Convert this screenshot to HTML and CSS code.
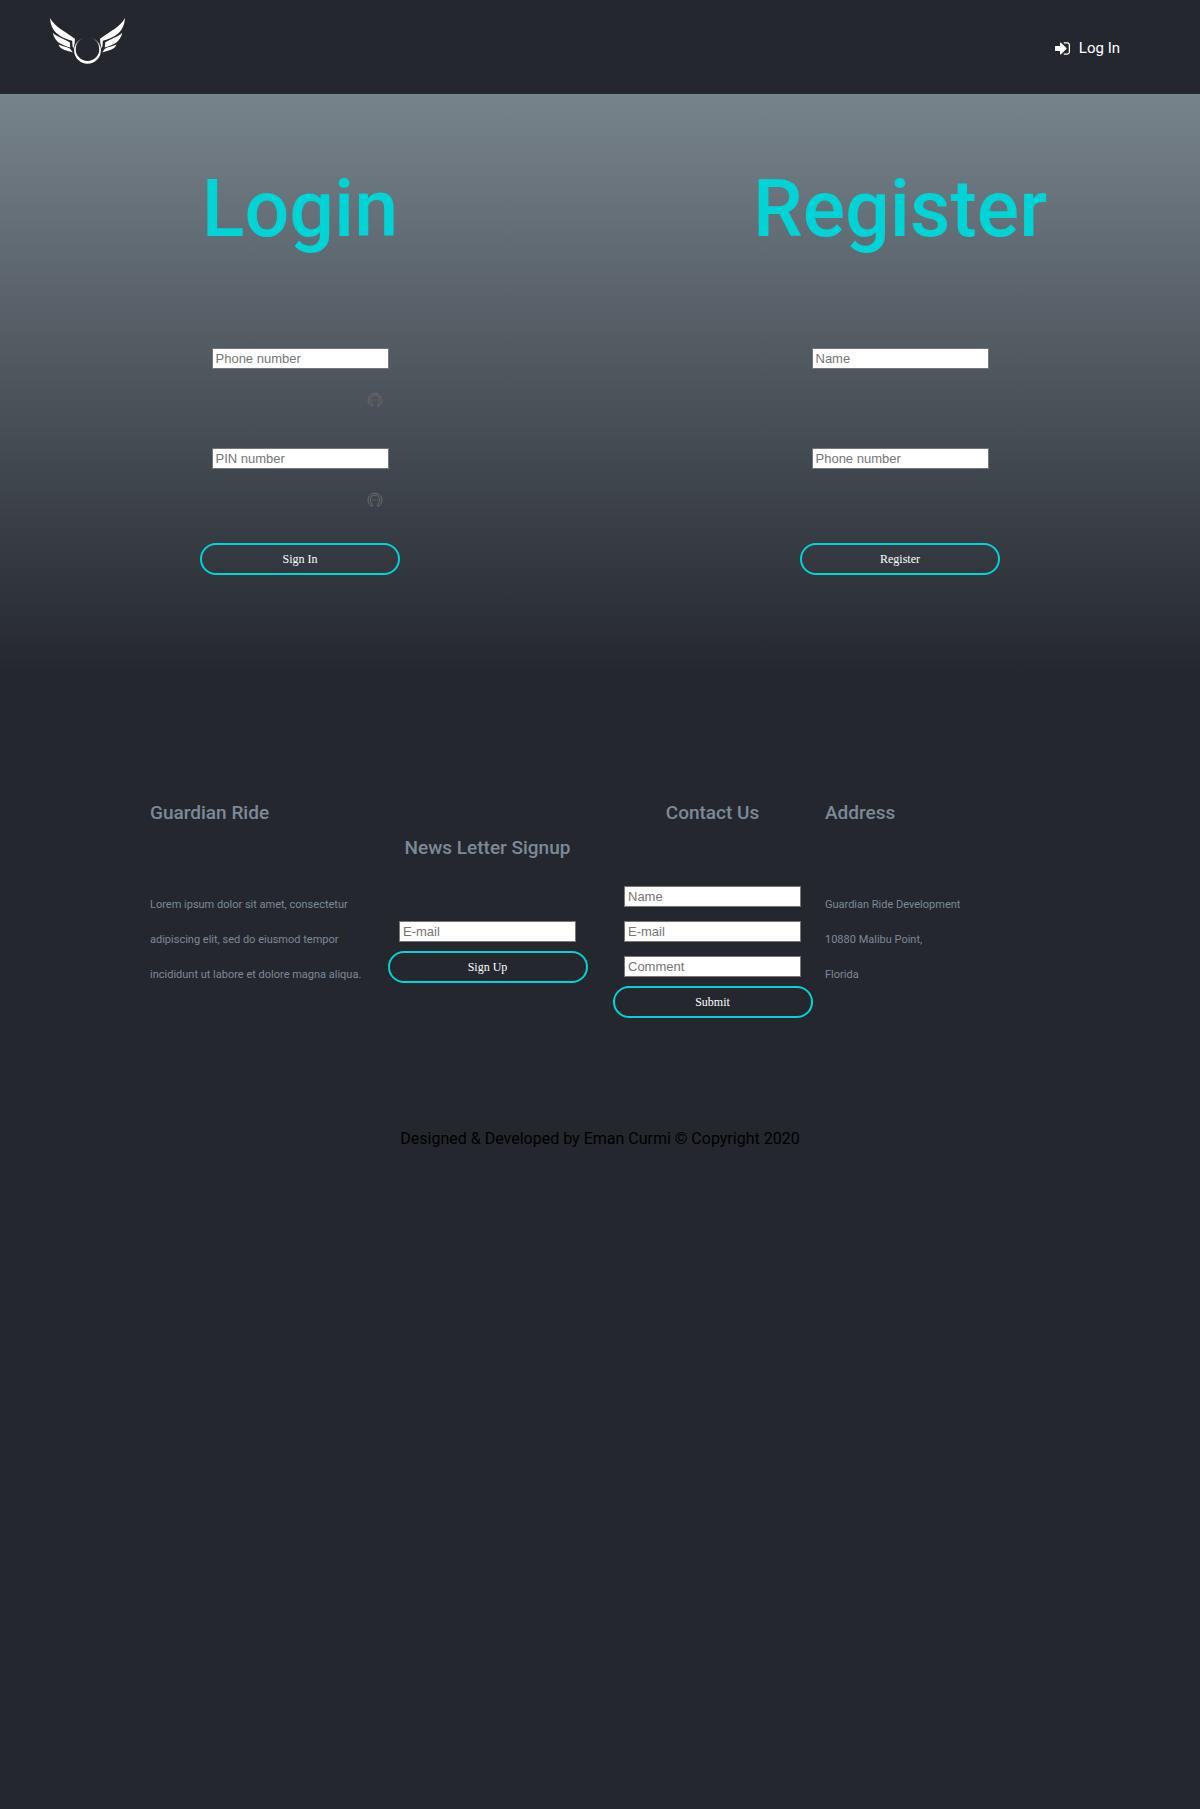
FILE: index.html
```html
<!DOCTYPE html>
<html lang="en">
<head>
<meta charset="utf-8">
<meta name="viewport" content="width=device-width, initial-scale=1">
<title>Guardian Ride</title>
<link rel="stylesheet" href="styles.css">
</head>
<body>
<header class="nav">
  <a class="nav-logo" href="#" aria-label="Guardian Ride home">
    <svg viewBox="60 55 223 140" width="75" height="47" fill="#fff" aria-hidden="true">
      <defs>
        <linearGradient id="ring-fade" x1="0" y1="0" x2="0" y2="1">
          <stop offset=".03" stop-color="#fff" stop-opacity="0"/>
          <stop offset=".4" stop-color="#fff"/>
        </linearGradient>
      </defs>
      <g id="wing">
        <path d="M60 55C72 80 106 96 134 117L132 148L127 140L126 123C98 115 62 102 60 55Z"/>
        <path d="M68 99C80 112 103 117 119 128L120 143C100 136 74 130 68 99Z"/>
        <path d="M85 134C95 139 108 140 119 146L128 158C112 151 92 152 85 134Z"/>
      </g>
      <use href="#wing" transform="matrix(-1 0 0 1 343 0)"/>
      <circle cx="171.500" cy="151" r="42" fill="#24272e"/>
      <path d="M171.500 111A40 40 0 0 0 171.500 191A40 40 0 0 0 171.500 111ZM171.500 113A35 35 0 0 1 171.500 183A35 35 0 0 1 171.500 113Z" fill="url(#ring-fade)" fill-rule="evenodd"/>
    </svg>
  </a>
  <a class="nav-link" href="#login">
    <svg viewBox="0 128 1536 1536" width="15" height="15" fill="currentColor" aria-hidden="true"><path d="M1184 896q0 26-19 45l-544 544q-19 19-45 19t-45-19-19-45v-288H64q-26 0-45-19T0 1088V704q0-26 19-45t45-19h448V352q0-26 19-45t45-19 45 19l544 544q19 19 19 45zm352-352v704q0 119-84.5 203.5T1248 1536H928q-13 0-22.5-9.5T896 1504q0-4-1-20t-.5-26.5 3-23.5 10-19.5T928 1408h320q66 0 113-47t47-113V544q0-66-47-113t-113-47H936l-11.5-1-11.5-3-8-5.5-7-9-2-13.5q0-4-1-20t-.5-26.5 3-23.5 10-19.5T928 256h320q119 0 203.5 84.5T1536 544z"/></svg>
    <span>Log In</span>
  </a>
</header>

<main class="hero">
  <section class="panel" id="login">
    <h1 class="title">Login</h1>
    <form class="form">
      <div class="field">
        <input class="input" type="tel" placeholder="Phone number" aria-label="Phone number">
        <svg class="key" viewBox="0 0 16 16" width="16" height="16" aria-hidden="true"><path d="M5 14.500A7 7 0 1 1 11 14.500M5.500 12A4.800 4.800 0 1 1 10.500 12M5 14.500L5.500 12M11 14.500L10.500 12"/><path d="M5 8h1.300M7.400 8h1.300M9.800 8h1.300"/></svg>
      </div>
      <div class="field">
        <input class="input" type="password" placeholder="PIN number" aria-label="PIN number">
        <svg class="key" viewBox="0 0 16 16" width="16" height="16" aria-hidden="true"><path d="M5 14.500A7 7 0 1 1 11 14.500M5.500 12A4.800 4.800 0 1 1 10.500 12M5 14.500L5.500 12M11 14.500L10.500 12"/><path d="M5 8h1.300M7.400 8h1.300M9.800 8h1.300"/></svg>
      </div>
      <button class="button" type="submit">Sign In</button>
    </form>
  </section>
  <section class="panel">
    <h1 class="title">Register</h1>
    <form class="form">
      <div class="field"><input class="input" type="text" placeholder="Name" aria-label="Name"></div>
      <div class="field"><input class="input" type="tel" placeholder="Phone number" aria-label="Phone number"></div>
      <button class="button" type="submit">Register</button>
    </form>
  </section>
</main>

<footer class="footer">
  <div class="footer-columns">
    <section>
      <h2 class="footer-title">Guardian Ride</h2>
      <p class="footer-text">Lorem ipsum dolor sit amet, consectetur<br>adipiscing elit, sed do eiusmod tempor<br>incididunt ut labore et dolore magna aliqua.</p>
    </section>
    <form class="footer-form newsletter">
      <h2 class="footer-title">News Letter Signup</h2>
      <div class="footer-inputs"><input class="input" type="email" placeholder="E-mail" aria-label="E-mail"></div>
      <button class="button" type="submit">Sign Up</button>
    </form>
    <form class="footer-form">
      <h2 class="footer-title">Contact Us</h2>
      <div class="footer-inputs">
        <input class="input" type="text" placeholder="Name" aria-label="Name">
        <input class="input" type="email" placeholder="E-mail" aria-label="E-mail">
        <input class="input" type="text" placeholder="Comment" aria-label="Comment">
      </div>
      <button class="button" type="submit">Submit</button>
    </form>
    <section>
      <h2 class="footer-title">Address</h2>
      <p class="footer-text">Guardian Ride Development<br>10880 Malibu Point,<br>Florida</p>
    </section>
  </div>
  <p class="copyright">Designed &amp; Developed by Eman Curmi © Copyright 2020</p>
</footer>
</body>
</html>
```
FILE: styles.css
```css
* { box-sizing: border-box; }

body {
  margin: 0;
  min-height: 100vh;
  background: #24272e;
  color: #000;
  font: 16px/35px Roboto, sans-serif;
}

h1, h2, p { margin: 0; }

.nav {
  display: flex;
  justify-content: space-between;
  align-items: flex-start;
  min-height: 94px;
  padding: 18px 80px 0 50px;
}

.nav-logo { display: flex; }

.nav-link {
  display: flex;
  align-items: center;
  gap: 9px;
  margin-top: 13px;
  color: #fff;
  font-size: 15px;
  text-decoration: none;
}

.hero {
  display: grid;
  grid-template-columns: 1fr 1fr;
  padding: 66px 0 109px;
  background: linear-gradient(#77838b, #24272e 98%);
}

.panel {
  display: flex;
  flex-direction: column;
  align-items: center;
}

.title {
  color: #00d4d6;
  font-size: 79px;
  font-weight: 500;
  line-height: 98px;
}

.form {
  display: flex;
  flex-direction: column;
  align-items: center;
  margin-top: 90px;
}

.field {
  display: flex;
  flex-direction: column;
  align-items: flex-end;
  gap: 23px;
  min-height: 60px;
}

.field + .field { margin-top: 40px; }

.field + .button { margin-top: 35px; }

.key {
  margin-right: 6px;
  fill: none;
  stroke: #6a6a6a;
  stroke-width: 1;
}

.input {
  width: 177px;
  height: 21px;
  padding: 0 3px 1px;
  border: 1px solid #767676;
  background: #fff;
  font: 13px "Liberation Sans", sans-serif;
}

.input::placeholder { color: #757575; }

.button {
  width: 200px;
  height: 32px;
  padding: 0;
  border: 2px solid #00d4d6;
  border-radius: 16px;
  background: transparent;
  color: #fff;
  font: 12px "Liberation Serif", serif;
  cursor: pointer;
}

.footer { padding: 111px 0 32px; }

.footer-columns {
  display: grid;
  grid-template-columns: repeat(4, 1fr);
  width: 75%;
  margin: 0 auto;
}

.footer-title {
  color: #7d8a96;
  font-size: 19px;
  font-weight: 500;
}

.footer-text {
  margin-top: 57px;
  color: #7d8a96;
  font-size: 11px;
  white-space: nowrap;
}

.footer-form {
  display: flex;
  flex-direction: column;
  align-items: center;
}

.newsletter { padding-top: 35px; }

.footer-inputs {
  display: grid;
  gap: 14px;
  margin: 56px 0 9px;
}

.copyright {
  margin-top: 103px;
  text-align: center;
}
```
